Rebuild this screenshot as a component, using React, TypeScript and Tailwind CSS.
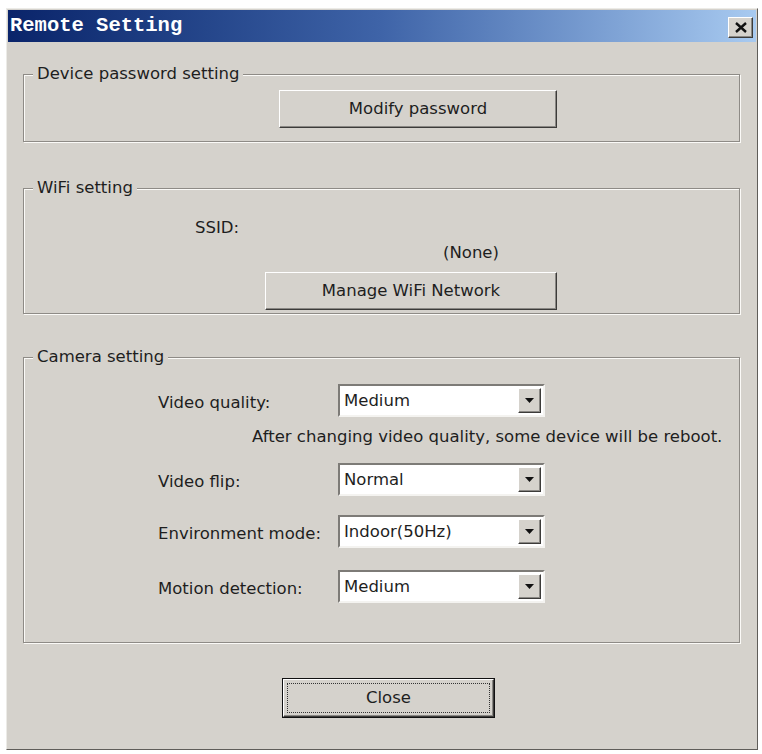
import React from "react";

const raised =
  "border border-t-white border-l-white border-r-[#3c3b39] border-b-[#3c3b39] shadow-[inset_-1px_-1px_0_#8a8884] bg-[#d5d2cc]";

function PushButton({ label, className }: { label: string; className: string }) {
  return (
    <button type="button" className={`${raised} flex items-center justify-center text-[#1e1e1e] ${className}`}>
      {label}
    </button>
  );
}

function Combo({ value }: { value: string }) {
  return (
    <div className="flex h-[33px] w-[207px] border-2 border-t-[#7d7b77] border-l-[#7d7b77] border-r-[#f4f3f0] border-b-[#f4f3f0] shadow-[inset_1px_1px_0_#3a3937]">
      <div className="flex flex-1 items-center bg-white pl-[4px] pt-[1px] text-[#1e1e1e]">{value}</div>
      <div className="flex items-stretch bg-white py-[2px] pr-[2px]">
        <div className={`${raised} flex w-[23px] items-center justify-center`}>
          <svg width="9" height="5" viewBox="0 0 9 5">
            <path d="M0 0h9L4.5 5z" fill="#111" />
          </svg>
        </div>
      </div>
    </div>
  );
}

function Group({ title, className, children }: { title: string; className: string; children: React.ReactNode }) {
  return (
    <fieldset
      className={`border border-[#8e8b86] shadow-[inset_1px_1px_0_#fbfaf7,1px_1px_0_#fbfaf7] ${className}`}
    >
      <legend className="ml-[9px] bg-[#d5d2cc] px-[4px] leading-[20px] text-[#1e1e1e]">{title}</legend>
      {children}
    </fieldset>
  );
}

const cameraRows = [
  { label: "Video flip:", value: "Normal", gap: "mt-[16px]" },
  { label: "Environment mode:", value: "Indoor(50Hz)", gap: "mt-[19px]" },
  { label: "Motion detection:", value: "Medium", gap: "mt-[22px]" },
];

export default function App() {
  return (
    <div className="h-[754px] w-[762px] bg-white pl-[6px] pt-[8px] font-['DejaVu_Sans',sans-serif] text-[16.5px]">
      <div className="flex h-[742px] w-[752px] flex-col border border-t-[#ecebe7] border-l-[#ecebe7] border-r-[#5f5d59] border-b-[#5f5d59] bg-[#d5d2cc] p-[1px]">
        {/* title bar */}
        <div className="flex h-[32px] items-center justify-between bg-gradient-to-r from-[#0a246a] via-[#3f64a8] to-[#a8caf0] pl-[2px] pr-[3px]">
          <span className="font-['Liberation_Mono',monospace] text-[20.5px] font-bold leading-none text-white">
            Remote Setting
          </span>
          <button type="button" className={`${raised} mt-[3px] flex h-[21px] w-[25px] items-center justify-center`}>
            <svg width="12" height="11" viewBox="0 0 12 11">
              <path d="M1 1l10 9M11 1L1 10" stroke="#111" strokeWidth="2.4" />
            </svg>
          </button>
        </div>

        <div className="flex flex-col pl-[15px] pr-[16px]">
          <Group title="Device password setting" className="mt-[22px] h-[78px]">
            <PushButton label="Modify password" className="ml-[255px] mt-[6px] h-[38px] w-[278px]" />
          </Group>

          <Group title="WiFi setting" className="mt-[36px] h-[136px]">
            <div className="ml-[171px] mt-[20px] leading-[20px] text-[#1e1e1e]">SSID:</div>
            <div className="ml-[419px] mt-[5px] leading-[20px] text-[#1e1e1e]">(None)</div>
            <PushButton label="Manage WiFi Network" className="ml-[241px] mt-[9px] h-[38px] w-[292px]" />
          </Group>

          <Group title="Camera setting" className="mt-[33px] h-[296px]">
            <div className="flex flex-col pl-[134px] text-[#1e1e1e]">
              <div className="mt-[17px] flex items-center">
                <span className="w-[180px] pt-[6px]">Video quality:</span>
                <Combo value="Medium" />
              </div>
              <div className="ml-[94px] mt-[10px] leading-[20px]">
                After changing video quality, some device will be reboot.
              </div>
              {cameraRows.map((row) => (
                <div key={row.label} className={`${row.gap} flex items-center`}>
                  <span className="w-[180px] pt-[6px]">{row.label}</span>
                  <Combo value={row.value} />
                </div>
              ))}
            </div>
          </Group>

          <button
            type="button"
            className="ml-[259px] mt-[35px] flex h-[40px] w-[213px] border border-[#111] bg-[#d5d2cc] p-0"
          >
            <div className={`${raised} flex flex-1 p-[3px]`}>
              <div className="flex flex-1 items-center justify-center border border-dotted border-[#333] text-[#1e1e1e]">
                Close
              </div>
            </div>
          </button>
        </div>
      </div>
    </div>
  );
}
